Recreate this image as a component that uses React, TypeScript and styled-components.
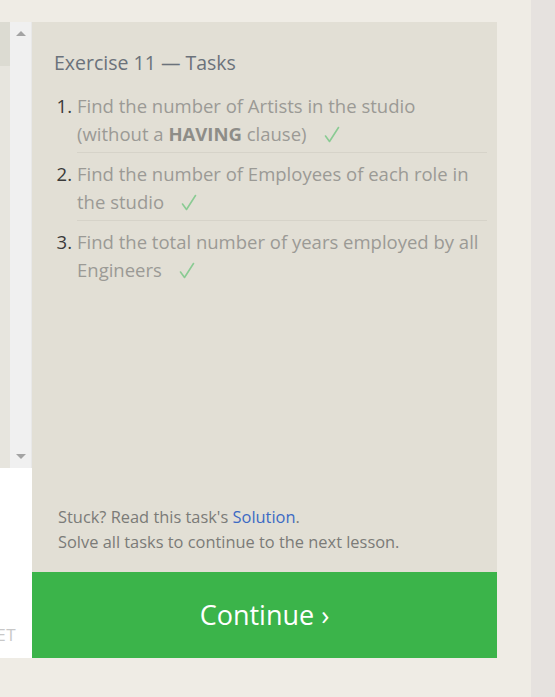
import React from "react";
import styled, { createGlobalStyle } from "styled-components";

const GlobalStyle = createGlobalStyle`
  html, body { margin: 0; padding: 0; }
  body {
    background: #efece5;
    font-family: "Open Sans", "Noto Sans", "Liberation Sans", sans-serif;
  }
`;

const Page = styled.div`
  display: flex;
  width: 555px;
  height: 697px;
  overflow: hidden;
`;

const Main = styled.div`
  flex: 1;
  display: flex;
  flex-direction: column;
  padding-top: 22px;
  background: #efece5;
`;

const RightStrip = styled.div`
  width: 24px;
  background: #e6e2df;
`;

const Row = styled.div`
  display: flex;
  height: 636px;
`;

const LeftStub = styled.div`
  width: 32px;
  display: flex;
  flex-direction: column;
`;

const EditorArea = styled.div`
  height: 446px;
  display: flex;
`;

const Gutter = styled.div`
  width: 10px;
  display: flex;
  flex-direction: column;
  background: #e7e5de;
`;

const GutterActive = styled.div`
  height: 44px;
  background: #dcdbd2;
`;

const Scrollbar = styled.div`
  width: 21px;
  background: #f0f0f0;
  border-right: 1px solid #e8e8e8;
  display: flex;
  flex-direction: column;
  justify-content: space-between;
  align-items: center;
  padding: 9px 0 9px;
`;

const Arrow = styled.div<{ $down?: boolean }>`
  width: 0;
  height: 0;
  border-left: 5px solid transparent;
  border-right: 5px solid transparent;
  ${(p) =>
    p.$down
      ? "border-top: 5px solid #a3a3a3;"
      : "border-bottom: 5px solid #a3a3a3;"}
`;

const ButtonArea = styled.div`
  flex: 1;
  background: #ffffff;
  display: flex;
  justify-content: flex-end;
  align-items: flex-end;
  padding: 0 16px 12px 0;
  overflow: hidden;
`;

const ResetText = styled.span`
  color: #c8c8c8;
  font-size: 17px;
  letter-spacing: 0.5px;
  white-space: nowrap;
`;

const Panel = styled.div`
  width: 465px;
  background: #e2dfd5;
  display: flex;
  flex-direction: column;
`;

const Content = styled.div`
  flex: 1;
  padding: 26px 10px 0 22px;
`;

const Title = styled.h2`
  margin: 0;
  font-weight: 400;
  font-size: 19.5px;
  line-height: 30px;
  color: #6b727b;
`;

const List = styled.ol`
  list-style: none;
  margin: 14px 0 0;
  padding: 0;
`;

const Item = styled.li`
  display: grid;
  grid-template-columns: 23px 1fr;
`;

const Num = styled.span<{ $first?: boolean }>`
  text-align: right;
  padding-right: 5px;
  padding-top: ${(p) => (p.$first ? "0" : "7px")};
  font-size: 18.5px;
  line-height: 28px;
  color: #3a3a3a;
`;

const ItemText = styled.div<{ $last?: boolean; $first?: boolean }>`
  padding: ${(p) => (p.$first ? "0" : "7px")} 0 4px;
  border-bottom: ${(p) => (p.$last ? "none" : "1px solid #d6d3c9")};
  font-size: 18.5px;
  line-height: 28px;
  color: #9b9a95;
`;

const Strong = styled.b`
  font-weight: 700;
  color: #8e8d88;
`;

const CheckIcon = styled.svg`
  display: inline-block;
  width: 16px;
  height: 17px;
  margin-left: 17px;
  vertical-align: -2px;
`;

const Check = () => (
  <CheckIcon viewBox="0 0 16 17" aria-label="done">
    <polyline
      points="1.5,10 5.5,15.5 14.5,1.5"
      fill="none"
      stroke="#8acb93"
      strokeWidth="1.6"
      strokeLinecap="round"
      strokeLinejoin="round"
    />
  </CheckIcon>
);

const Footer = styled.div`
  padding: 0 20px 18px 26px;
  font-size: 16.4px;
  line-height: 25px;
  color: #7b7b78;
`;

const Link = styled.a`
  color: #3c6ac4;
  text-decoration: none;
`;

const ContinueButton = styled.button`
  height: 86px;
  border: none;
  background: #3bb44a;
  color: #ffffff;
  font-family: inherit;
  font-size: 27px;
  padding: 0 0 2px;
  cursor: pointer;
`;

const tasks: { text: React.ReactNode }[] = [
  {
    text: (
      <>
        Find the number of Artists in the studio (without a <Strong>HAVING</Strong> clause)
      </>
    ),
  },
  { text: <>Find the number of Employees of each role in the studio</> },
  { text: <>Find the total number of years employed by all Engineers</> },
];

export default function App() {
  return (
    <Page>
      <GlobalStyle />
      <Main>
        <Row>
          <LeftStub>
            <EditorArea>
              <Gutter>
                <GutterActive />
              </Gutter>
              <Scrollbar>
                <Arrow />
                <Arrow $down />
              </Scrollbar>
            </EditorArea>
            <ButtonArea>
              <ResetText>RESET</ResetText>
            </ButtonArea>
          </LeftStub>
          <Panel>
            <Content>
              <Title>Exercise 11 — Tasks</Title>
              <List>
                {tasks.map((t, i) => (
                  <Item key={i}>
                    <Num $first={i === 0}>{i + 1}.</Num>
                    <ItemText $first={i === 0} $last={i === tasks.length - 1}>
                      {t.text}
                      <Check />
                    </ItemText>
                  </Item>
                ))}
              </List>
            </Content>
            <Footer>
              Stuck? Read this task's <Link href="#">Solution</Link>.
              <br />
              Solve all tasks to continue to the next lesson.
            </Footer>
            <ContinueButton>Continue ›</ContinueButton>
          </Panel>
        </Row>
      </Main>
      <RightStrip />
    </Page>
  );
}
